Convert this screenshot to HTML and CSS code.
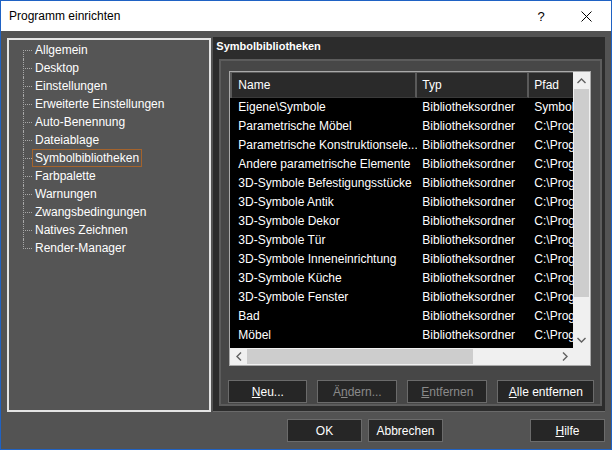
FILE: index.html
```html
<!DOCTYPE html>
<html lang="de">
<head>
    <meta charset="UTF-8">
    <title>Programm einrichten</title>
    <link rel="stylesheet" href="styles.css">
</head>
<body>
    <div class="window">
        <div class="titlebar">
            <span class="title">Programm einrichten</span>
            <span class="tb-help">?</span>
            <span class="tb-close">
                <svg width="11" height="11" viewBox="0 0 11 11"><path d="M0.5 0.5 L10.5 10.5 M10.5 0.5 L0.5 10.5" stroke="#000" stroke-width="1" fill="none"/></svg>
            </span>
        </div>
        <div class="content">
            <div class="main">
                <div class="tree-panel">
                    <ul class="tree">
                        <li><span>Allgemein</span></li>
                        <li><span>Desktop</span></li>
                        <li><span>Einstellungen</span></li>
                        <li><span>Erweiterte Einstellungen</span></li>
                        <li><span>Auto-Benennung</span></li>
                        <li><span>Dateiablage</span></li>
                        <li><span class="selected">Symbolbibliotheken</span></li>
                        <li><span>Farbpalette</span></li>
                        <li><span>Warnungen</span></li>
                        <li><span>Zwangsbedingungen</span></li>
                        <li><span>Natives Zeichnen</span></li>
                        <li class="last"><span>Render-Manager</span></li>
                    </ul>
                </div>
                <div class="page">
                    <div class="page-title">Symbolbibliotheken</div>
                    <div class="group">
                        <div class="list">
                            <div class="list-top">
                                <div class="list-body">
                                    <div class="list-header">
                                        <div class="col name">Name</div>
                                        <div class="col typ">Typ</div>
                                        <div class="col pfad">Pfad</div>
                                    </div>
                                    <div class="row"><div class="col name">Eigene\Symbole</div><div class="col typ">Bibliotheksordner</div><div class="col pfad">Symbole</div></div>
                                    <div class="row"><div class="col name">Parametrische Möbel</div><div class="col typ">Bibliotheksordner</div><div class="col pfad">C:\Prog</div></div>
                                    <div class="row"><div class="col name">Parametrische Konstruktionsele...</div><div class="col typ">Bibliotheksordner</div><div class="col pfad">C:\Prog</div></div>
                                    <div class="row"><div class="col name">Andere parametrische Elemente</div><div class="col typ">Bibliotheksordner</div><div class="col pfad">C:\Prog</div></div>
                                    <div class="row"><div class="col name">3D-Symbole Befestigungsstücke</div><div class="col typ">Bibliotheksordner</div><div class="col pfad">C:\Prog</div></div>
                                    <div class="row"><div class="col name">3D-Symbole Antik</div><div class="col typ">Bibliotheksordner</div><div class="col pfad">C:\Prog</div></div>
                                    <div class="row"><div class="col name">3D-Symbole Dekor</div><div class="col typ">Bibliotheksordner</div><div class="col pfad">C:\Prog</div></div>
                                    <div class="row"><div class="col name">3D-Symbole Tür</div><div class="col typ">Bibliotheksordner</div><div class="col pfad">C:\Prog</div></div>
                                    <div class="row"><div class="col name">3D-Symbole Inneneinrichtung</div><div class="col typ">Bibliotheksordner</div><div class="col pfad">C:\Prog</div></div>
                                    <div class="row"><div class="col name">3D-Symbole Küche</div><div class="col typ">Bibliotheksordner</div><div class="col pfad">C:\Prog</div></div>
                                    <div class="row"><div class="col name">3D-Symbole Fenster</div><div class="col typ">Bibliotheksordner</div><div class="col pfad">C:\Prog</div></div>
                                    <div class="row"><div class="col name">Bad</div><div class="col typ">Bibliotheksordner</div><div class="col pfad">C:\Prog</div></div>
                                    <div class="row"><div class="col name">Möbel</div><div class="col typ">Bibliotheksordner</div><div class="col pfad">C:\Prog</div></div>
                                </div>
                                <div class="vscroll">
                                    <div class="arrow">
                                        <svg width="9" height="6" viewBox="0 0 9 6"><path d="M0.5 5 L4.5 1 L8.5 5" stroke="#606060" stroke-width="1.4" fill="none"/></svg>
                                    </div>
                                    <div class="vthumb"></div>
                                    <div class="vtrack"></div>
                                    <div class="arrow">
                                        <svg width="9" height="6" viewBox="0 0 9 6"><path d="M0.5 1 L4.5 5 L8.5 1" stroke="#606060" stroke-width="1.4" fill="none"/></svg>
                                    </div>
                                </div>
                            </div>
                            <div class="hscroll">
                                <div class="harrow">
                                    <svg width="6" height="9" viewBox="0 0 6 9"><path d="M5 0.5 L1 4.5 L5 8.5" stroke="#606060" stroke-width="1.4" fill="none"/></svg>
                                </div>
                                <div class="hthumb"></div>
                                <div class="htrack"></div>
                                <div class="harrow">
                                    <svg width="6" height="9" viewBox="0 0 6 9"><path d="M1 0.5 L5 4.5 L1 8.5" stroke="#606060" stroke-width="1.4" fill="none"/></svg>
                                </div>
                                <div class="corner"></div>
                            </div>
                        </div>
                        <div class="list-buttons">
                            <button class="btn w-neu"><u>N</u>eu...</button>
                            <button class="btn w-mid disabled">Ä<u>n</u>dern...</button>
                            <button class="btn w-mid disabled"><u>E</u>ntfernen</button>
                            <button class="btn w-alle"><u>A</u>lle entfernen</button>
                        </div>
                    </div>
                </div>
            </div>
            <div class="dialog-buttons">
                <button class="btn w-dlg">OK</button>
                <button class="btn w-dlg">Abbrechen</button>
                <span class="spacer"></span>
                <button class="btn w-dlg"><u>H</u>ilfe</button>
            </div>
        </div>
    </div>
</body>
</html>
```

FILE: styles.css
```css
* {
    box-sizing: border-box;
}
body {
    margin: 0;
    font-family: "Liberation Sans", Arial, sans-serif;
    font-size: 12px;
    background: #535353;
}
.window {
    width: 612px;
    height: 450px;
    border: 1px solid #1f62c4;
    display: flex;
    flex-direction: column;
    background: #535353;
}
.titlebar {
    height: 30px;
    background: #fff;
    display: flex;
    align-items: center;
    color: #000;
}
.title {
    padding-left: 8px;
    flex: 1;
}
.tb-help {
    width: 20px;
    text-align: center;
    margin-right: 30px;
    font-size: 13px;
}
.tb-close {
    width: 11px;
    height: 11px;
    margin-right: 19px;
    display: flex;
}
.content {
    flex: 1;
    padding: 7px 6px 0 6px;
    color: #fff;
}
.main {
    display: flex;
    align-items: flex-start;
}
.tree-panel {
    width: 205px;
    height: 374px;
    border: 2px solid #e4e4e4;
    background: #555;
}
.tree {
    list-style: none;
    margin: 0;
    padding: 1px 0 0 23px;
}
.tree li {
    height: 18px;
    line-height: 18px;
    position: relative;
}
.tree li::before {
    content: "";
    position: absolute;
    left: -9px;
    top: 0;
    height: 18px;
    width: 9px;
    border-left: 1px dotted #a8a8a8;
}
.tree li::after {
    content: "";
    position: absolute;
    left: -9px;
    top: 9px;
    width: 9px;
    border-top: 1px dotted #a8a8a8;
}
.tree li:first-child::before {
    top: 9px;
    height: 9px;
}
.tree li.last::before {
    height: 10px;
}
.tree li span {
    display: inline-block;
    padding: 0 2px;
    line-height: 16px;
    border: 1px solid transparent;
}
.tree li span.selected {
    border-color: #a4632c;
}
.page {
    width: 393px;
    height: 375px;
    margin: -1px 0 0 2px;
    background: #2c2c2c;
    border-bottom: 1px solid #6a6a6a;
}
.page-title {
    height: 22px;
    padding: 3px 0 0 3px;
    font-weight: bold;
    font-size: 11px;
}
.group {
    width: 383px;
    height: 347px;
    margin-left: 6px;
    border: 2px solid #5c5c5c;
    background: #474747;
    padding: 10px 0 0 8px;
}
.list {
    width: 362px;
    height: 295px;
    border: 1px solid #a9a9a9;
    background: #000;
    display: flex;
    flex-direction: column;
}
.list-top {
    display: flex;
    flex: 1;
    min-height: 0;
}
.list-body {
    flex: 1;
    overflow: hidden;
}
.list-header {
    display: flex;
    height: 26px;
    background: #2a2a2a;
    border-left: 2px solid #5a5a5a;
    border-top: 1px solid #5a5a5a;
}
.list-header .col {
    line-height: 24px;
    border-right: 2px solid #5a5a5a;
    border-bottom: 1px solid #3a3a3a;
}
.row {
    display: flex;
    height: 19px;
    line-height: 19px;
}
.col {
    flex-shrink: 0;
    white-space: nowrap;
    overflow: hidden;
}
.col.name {
    width: 187px;
    padding-left: 8px;
}
.list-header .col.name {
    width: 185px;
    padding-left: 6px;
}
.col.typ {
    width: 112px;
    padding-left: 5px;
}
.col.pfad {
    width: 60px;
    padding-left: 5px;
}
.vscroll {
    width: 17px;
    flex-shrink: 0;
    background: #f0f0f0;
    display: flex;
    flex-direction: column;
}
.arrow {
    height: 17px;
    display: flex;
    align-items: center;
    justify-content: center;
}
.vthumb {
    height: 208px;
    margin: 0 1px;
    background: #cdcdcd;
}
.vtrack {
    flex: 1;
}
.hscroll {
    height: 17px;
    background: #f0f0f0;
    display: flex;
}
.harrow {
    width: 17px;
    display: flex;
    align-items: center;
    justify-content: center;
}
.hthumb {
    width: 226px;
    margin: 1px 0;
    background: #cdcdcd;
}
.htrack {
    flex: 1;
}
.corner {
    width: 17px;
    background: #f0f0f0;
}
.list-buttons {
    display: flex;
    gap: 10px;
    margin: 14px 0 0 -1px;
}
.btn {
    height: 23px;
    background: #262626;
    color: #fff;
    border: 1px solid #6b6b6b;
    font-family: "Liberation Sans", Arial, sans-serif;
    font-size: 12px;
    padding: 0;
}
.btn.disabled {
    color: #8a8a8a;
}
.w-neu {
    width: 79px;
}
.w-mid {
    width: 80px;
}
.w-alle {
    width: 97px;
}
.dialog-buttons {
    display: flex;
    gap: 6px;
    margin-top: 7px;
    padding-left: 280px;
}
.spacer {
    flex: 1;
}
.w-dlg {
    width: 75px;
}
```
